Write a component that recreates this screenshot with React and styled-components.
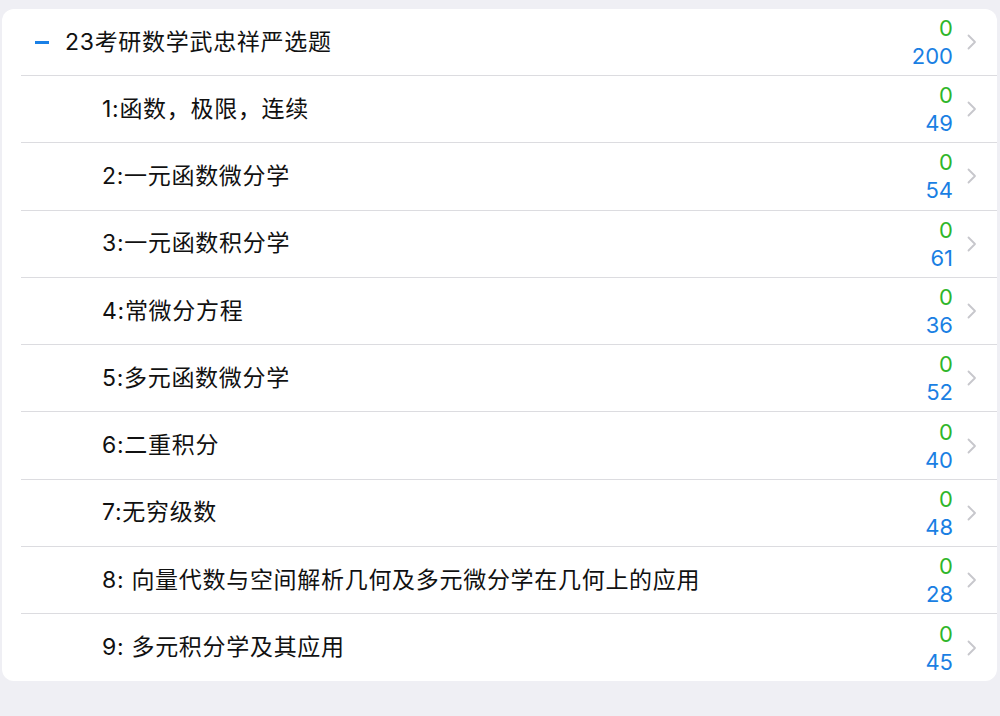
import React from 'react';
import styled, { createGlobalStyle } from 'styled-components';

const GlobalStyle = createGlobalStyle`
	body {
		margin: 0;
		background: #efeff4;
		font-family: "Inter", "Noto Sans CJK SC", sans-serif;
		-webkit-font-smoothing: antialiased;
	}
`;

const Page = styled.div`
	height: 716px;
	padding: 9px 3px 0 2px;
	box-sizing: border-box;
`;

const Card = styled.div`
	background: #fff;
	border-radius: 12px;
	overflow: hidden;
`;

const Row = styled.div`
	display: flex;
	align-items: center;
	height: ${p => (p.header ? 66 : 67.3)}px;
	margin-left: 19px;
	padding-right: 20px;
	box-sizing: border-box;
	border-top: ${p => (p.header ? 'none' : '1px solid #dcdce0')};
`;

const Minus = styled.span`
	width: 14px;
	height: 2.5px;
	background: #1a80e6;
	margin: 1px 16px 0 14px;
	flex-shrink: 0;
`;

const Title = styled.span`
	flex: 1;
	font-family: "Inter", "Noto Sans CJK SC", sans-serif;
	font-size: 23px;
	line-height: 30px;
	letter-spacing: 0.7px;
	color: #111;
	padding: 0 0 1px ${p => (p.indent ? 81 : 0)}px;
	white-space: nowrap;
	overflow: hidden;
`;

const Counts = styled.div`
	display: flex;
	flex-direction: column;
	align-items: flex-end;
	font-size: 22px;
	line-height: 28px;
`;

const Done = styled.span`
	color: #2fb62a;
`;

const Total = styled.span`
	color: #1a7fe3;
`;

const Chevron = styled.svg`
	width: 10px;
	height: 16px;
	margin-left: 14px;
	flex-shrink: 0;
`;

const chapters = [
	['1:函数，极限，连续', 49],
	['2:一元函数微分学', 54],
	['3:一元函数积分学', 61],
	['4:常微分方程', 36],
	['5:多元函数微分学', 52],
	['6:二重积分', 40],
	['7:无穷级数', 48],
	['8: 向量代数与空间解析几何及多元微分学在几何上的应用', 28],
	['9: 多元积分学及其应用', 45],
];

const Arrow = () => (
	<Chevron viewBox="0 0 10 16">
		<path d="M1.5 1.5 L8 8 L1.5 14.5" fill="none" stroke="#c7c7cc" strokeWidth="1.8" strokeLinecap="round" strokeLinejoin="round" />
	</Chevron>
);

const App = () => (
	<Page>
		<GlobalStyle />
		<Card>
			<Row header>
				<Minus />
				<Title>23考研数学武忠祥严选题</Title>
				<Counts>
					<Done>0</Done>
					<Total>200</Total>
				</Counts>
				<Arrow />
			</Row>
			{chapters.map(([name, total]) => (
				<Row key={name}>
					<Title indent>{name}</Title>
					<Counts>
						<Done>0</Done>
						<Total>{total}</Total>
					</Counts>
					<Arrow />
				</Row>
			))}
		</Card>
	</Page>
);

export default App;
